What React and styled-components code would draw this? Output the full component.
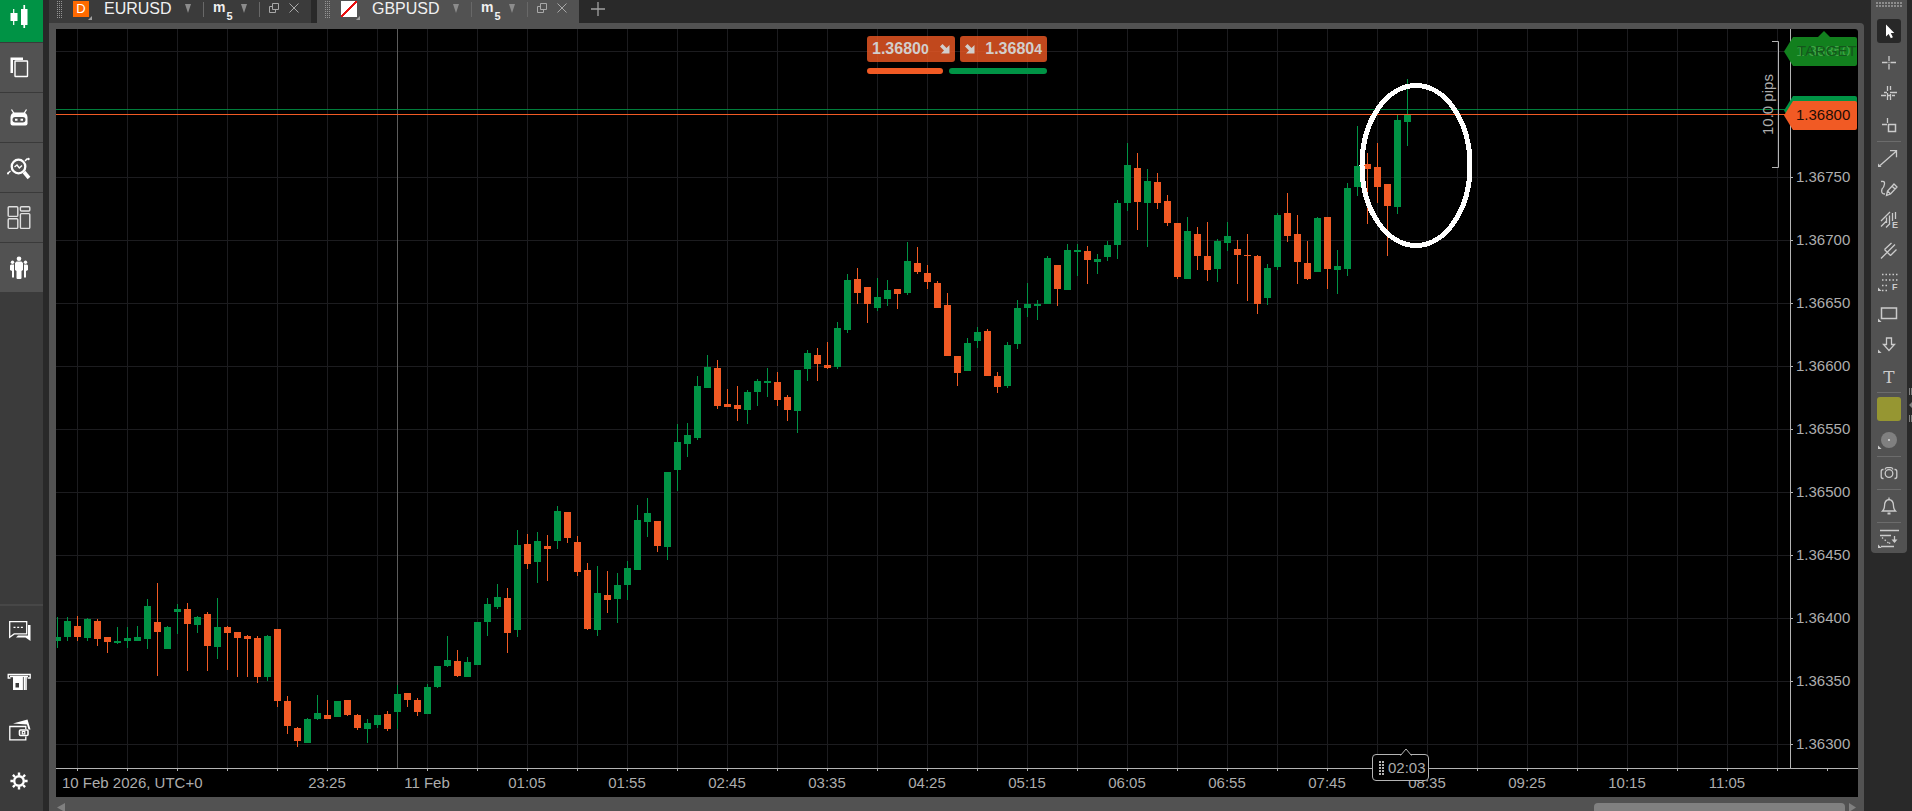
import React from 'react';
import styled, { createGlobalStyle } from 'styled-components';

const UP = '#009345';
const DOWN = '#f15a24';

const GlobalStyle = createGlobalStyle`
  * {
    box-sizing: border-box;
  }

  body {
    margin: 0;
    overflow: hidden;
    background-color: #292929;
    font-family: "Liberation Sans", Arial, sans-serif;
    font-size: 15px;
  }

  button {
    padding: 0;
    border: 0;
    background: none;
    color: inherit;
    font: inherit;
    cursor: pointer;
  }
`

const Page = styled.div`
  display: flex;
  height: 100vh;
  overflow: hidden;
`

/* ---------- left sidebar ---------- */

const Sidebar = styled.nav`
  flex: none;
  width: 43px;
  display: flex;
  flex-direction: column;
  justify-content: space-between;
  background-color: #3b3b3b;
`

const SideGroup = styled.div`
  display: flex;
  flex-direction: column;
  margin-top: -8px;
`

const SideFooter = styled.div`
  display: flex;
  flex-direction: column;
  padding-bottom: 5px;
  border-top: 2px solid #474747;
`

const SideButton = styled.button`
  display: flex;
  align-items: center;
  justify-content: center;
  height: 50px;
  padding-right: 6px;
  color: #fff;
  background-color: ${props => (props.$active ? UP : props.$plain ? 'transparent' : '#525252')};
  border-top: ${props => (props.$plain || props.$active ? '0' : '1px solid #3a3a3a')};
`

/* ---------- workspace ---------- */

const Workspace = styled.main`
  flex: 1;
  min-width: 0;
  display: flex;
  flex-direction: column;
  padding-left: 6px;
`

const TabBar = styled.div`
  display: flex;
  height: 23px;
  gap: 6px;
`

const Tab = styled.div`
  display: flex;
  align-items: flex-start;
  width: 262px;
  padding-left: 8px;
  color: #f0f0f0;
  background-color: ${props => (props.$active ? '#525252' : '#3b3b3b')};
`

const Grip = styled.span`
  width: 5px;
  height: 17px;
  margin: 1px 11px 0 0;
  background-image:
    linear-gradient(transparent 1px, ${props => (props.$active ? '#525252' : '#3b3b3b')} 1px),
    linear-gradient(90deg, #949494 1px, transparent 1px);
  background-size: 2px 2px;
`

const SymbolBadge = styled.button`
  position: relative;
  width: 16px;
  height: 16px;
  margin: 1px 15px 0 0;
  color: #fff;
  font-size: 13px;
  line-height: 16px;
  background: ${props => props.$fill};

  &::after {
    content: "";
    position: absolute;
    right: -3px;
    bottom: -3px;
    border-left: 4px solid transparent;
    border-bottom: 4px solid #a0a0a0;
  }
`

const SymbolName = styled.span`
  width: 81px;
  font-size: 16px;
  line-height: 17px;
`

const Caret = styled.button`
  width: 6px;
  height: 9px;
  margin: 4px 12px 0 0;
  background-color: #8c8c8c;
  clip-path: polygon(0 0, 100% 0, 50% 100%);
`

const Separator = styled.span`
  width: 1px;
  height: 15px;
  margin: 2px 9px 0 0;
  background-color: #686868;
`

const Period = styled.span`
  display: flex;
  gap: 1px;
  width: 28px;
  font-size: 14px;
  font-weight: bold;
  line-height: 14px;

  sub {
    margin-top: 10px;
    font-size: 11px;
    line-height: 12px;
  }
`

const TabAction = styled.button`
  display: flex;
  width: 20px;
  margin-top: 3px;
  color: #a8a8a8;
`

const AddTab = styled.button`
  display: flex;
  align-self: flex-start;
  margin: 2px 0 0 6px;
  color: #a0a0a0;
`

const Panel = styled.section`
  flex: 1;
  min-height: 0;
  display: flex;
  flex-direction: column;
  margin-right: 7px;
  padding: 6px 6px 0 7px;
  background-color: #525252;
  border-top-right-radius: 4px;
`

const Chart = styled.div`
  position: relative;
  flex: 1;
  min-height: 0;
  display: grid;
  grid-template-columns: minmax(0, 1fr) 68px;
  grid-template-rows: minmax(0, 1fr) 29px;
  background-color: #000;
  border-radius: 0 3px 0 0;
  color: #adadad;
`

const Plot = styled.div`
  position: relative;
  overflow: hidden;
  background-image:
    linear-gradient(90deg, #1c1c1f 1px, transparent 1px),
    linear-gradient(#1c1c1f 1px, transparent 1px);
  background-size: 50px 50px, 63px 63px;
  background-position: 21px 0, 0 22px;
`

const PlotCanvas = styled.svg`
  display: block;
  width: 100%;
  height: 100%;
`

const Ruler = styled.svg`
  position: absolute;
  top: 0;
  right: 0;
`

const PriceAxis = styled.div`
  position: relative;
  border-left: 1px solid #b4b4b4;
  background-image: linear-gradient(#b4b4b4 1px, transparent 1px);
  background-size: 2px 63px;
  background-position: 0 22px;
  background-repeat: repeat-y;
`

const PriceList = styled.ol`
  height: 100%;
  margin: 0;
  padding: 54px 0 0 5px;
  overflow: hidden;
  list-style: none;
`

const PriceLabel = styled.li`
  height: 63px;
  line-height: 62px;

  &:first-child {
    visibility: hidden;
  }
`

const TimeAxis = styled.ol`
  grid-column: 1 / -1;
  display: flex;
  margin: 0;
  padding: 0;
  overflow: hidden;
  list-style: none;
  border-top: 1px solid #b4b4b4;
  line-height: 28px;
  background-image: linear-gradient(90deg, #b4b4b4 1px, transparent 1px);
  background-size: 50px 2px;
  background-position: 21px 0;
  background-repeat: repeat-x;
`

const TimeLabel = styled.li`
  flex: none;
  width: 100px;
  text-align: center;

  &:first-child {
    width: 221px;
    padding-left: 6px;
    text-align: left;
  }
`

/* price flags hang over the axis line */
const Flag = styled.div`
  position: absolute;
  top: ${props => props.$top}px;
  right: 1px;
  width: 73px;
  height: 29px;
  padding-left: 12px;
  line-height: 28px;
  color: ${props => props.$ink};

  svg {
    position: absolute;
    top: -6px;
    left: 0;
  }

  span {
    position: relative;
  }

  span + span {
    position: absolute;
    left: 13px;
    color: #14571c;
  }
`

const Quotes = styled.div`
  position: absolute;
  top: 7px;
  left: 50%;
  width: 180px;
  margin-left: -90px;
  display: flex;
  flex-direction: column;
  gap: 6px;
`

const QuoteRow = styled.div`
  display: flex;
  gap: ${props => props.$gap}px;
`

const QuoteButton = styled.button`
  flex: 1;
  display: flex;
  align-items: center;
  justify-content: space-between;
  height: 26px;
  padding: 0 5px;
  border-radius: 3px;
  color: #d2cecc;
  font-size: 16px;
  font-weight: bold;
  line-height: 24px;
  background-color: rgba(241, 90, 36, 0.8);

  small {
    font-size: 14px;
  }
`

const Sentiment = styled.span`
  flex: ${props => props.$share};
  height: 6px;
  border-radius: 3px;
  background-color: ${props => props.$color};
`

const Countdown = styled.div`
  position: absolute;
  left: 1316px;
  bottom: 16px;
  display: flex;
  align-items: center;
  gap: 2px;
  width: 57px;
  height: 27px;
  padding-left: 6px;
  border: 1px solid #b4b4b4;
  border-radius: 4px;
  background-color: #000;
  line-height: 24px;

  > svg:first-child {
    position: absolute;
    top: -7px;
    left: 27px;
  }
`

const ScrollBar = styled.div`
  flex: none;
  display: flex;
  justify-content: space-between;
  height: 14px;
  padding: 6px 2px 0 1px;
  overflow: hidden;
  color: #808080;
`

const ScrollEnd = styled.div`
  display: flex;
  gap: 4px;
`

const ScrollThumb = styled.span`
  width: 251px;
  height: 11px;
  border-radius: 4px;
  background-color: #808080;
`

/* ---------- drawing toolbar ---------- */

const ToolRail = styled.aside`
  flex: none;
  display: flex;
  width: 41px;
`

const Tools = styled.div`
  display: flex;
  flex-direction: column;
  align-self: flex-start;
  width: 36px;
  padding: 2px 6px 2px;
  border-radius: 0 0 4px 4px;
  background-color: #525252;
`

const ToolGrip = styled.span`
  height: 6px;
  margin: 0 -1px 11px;
  background-image:
    linear-gradient(transparent 2px, #525252 2px),
    linear-gradient(90deg, #8c8c8c 2px, transparent 2px);
  background-size: 3px 3px;
`

const ToolGroup = styled.div`
  display: flex;
  flex-direction: column;
  gap: 7px;
`

const ToolButton = styled.button`
  display: flex;
  width: 24px;
  height: 24px;
  border-radius: 3px;
  color: #cbcbcb;
  background-color: ${props => props.$fill || 'transparent'};
`

const ToolDivider = styled.span`
  height: 1px;
  margin: ${props => (props.$tight ? '4px 0' : '5px 0 4px')};
  background-color: #6c6c6c;
`

const RailHandle = styled.button`
  display: flex;
  align-self: flex-start;
  width: 4px;
  margin: 388px 0 0 1px;
  overflow: hidden;
`

const prices = [
  '1.36800', '1.36750', '1.36700', '1.36650', '1.36600', '1.36550',
  '1.36500', '1.36450', '1.36400', '1.36350', '1.36300',
];

const times = [
  '10 Feb 2026, UTC+0', '23:25', '11 Feb', '01:05', '01:55', '02:45', '03:35', '04:25',
  '05:15', '06:05', '06:55', '07:45', '08:35', '09:25', '10:15', '11:05',
];

// direction, high, body top, body bottom, low
const candles = [
  ['u', 617, 637, 641, 648], ['u', 617, 621, 637, 641], ['d', 616, 626, 637, 641], ['u', 618, 619, 638, 641],
  ['d', 619, 621, 639, 646], ['d', 637, 637, 642, 653], ['u', 627, 641, 643, 644], ['u', 627, 638, 641, 648],
  ['u', 626, 637, 641, 641], ['u', 599, 606, 639, 649], ['d', 583, 622, 632, 676], ['u', 626, 627, 649, 649],
  ['u', 604, 609, 612, 634], ['d', 603, 609, 624, 671], ['u', 616, 617, 625, 633], ['d', 612, 614, 646, 671],
  ['u', 598, 627, 647, 659], ['d', 626, 627, 633, 670], ['d', 632, 632, 638, 677], ['d', 635, 636, 639, 677],
  ['d', 636, 638, 677, 683], ['u', 635, 636, 677, 681], ['d', 629, 629, 701, 707], ['d', 696, 701, 726, 734],
  ['d', 727, 728, 741, 747], ['u', 718, 719, 743, 743], ['u', 695, 713, 719, 720], ['d', 700, 715, 719, 719],
  ['u', 701, 701, 717, 717], ['d', 700, 700, 715, 716], ['d', 714, 715, 728, 730], ['u', 719, 723, 729, 743],
  ['u', 715, 715, 725, 728], ['d', 711, 714, 729, 731], ['u', 685, 694, 712, 729], ['d', 693, 693, 700, 707],
  ['d', 698, 700, 712, 716], ['u', 684, 687, 714, 714], ['u', 666, 666, 687, 688], ['u', 636, 660, 666, 667],
  ['d', 650, 661, 676, 677], ['u', 657, 662, 677, 677], ['u', 622, 622, 665, 665], ['u', 598, 604, 622, 636],
  ['u', 584, 597, 607, 609], ['d', 588, 598, 633, 653], ['u', 530, 545, 630, 637], ['d', 534, 544, 564, 569],
  ['u', 532, 541, 562, 583], ['d', 535, 546, 549, 581], ['u', 506, 511, 541, 549], ['d', 512, 512, 538, 543],
  ['d', 536, 542, 572, 576], ['d', 563, 570, 629, 630], ['u', 566, 593, 630, 636], ['d', 571, 595, 600, 613],
  ['u', 573, 585, 599, 623], ['u', 561, 568, 585, 600], ['u', 505, 520, 570, 570], ['u', 498, 513, 522, 537],
  ['d', 521, 521, 546, 552], ['u', 472, 472, 547, 560], ['u', 424, 442, 470, 491], ['u', 423, 435, 444, 457],
  ['u', 376, 386, 438, 440], ['u', 355, 367, 388, 388], ['d', 360, 368, 406, 409], ['d', 389, 404, 407, 407],
  ['d', 386, 405, 409, 421], ['u', 390, 392, 410, 424], ['u', 379, 381, 392, 406], ['u', 368, 381, 383, 397],
  ['d', 372, 382, 400, 406], ['d', 395, 397, 410, 421], ['u', 370, 370, 411, 433], ['u', 350, 353, 369, 381],
  ['d', 348, 355, 364, 381], ['d', 342, 365, 368, 369], ['u', 322, 328, 367, 369], ['u', 274, 280, 330, 333],
  ['d', 268, 279, 293, 304], ['d', 287, 287, 304, 323], ['u', 278, 297, 308, 311], ['u', 280, 290, 299, 306],
  ['d', 289, 289, 294, 309], ['u', 242, 261, 293, 295], ['d', 247, 263, 272, 274], ['d', 265, 273, 282, 289],
  ['d', 281, 283, 308, 308], ['d', 293, 305, 356, 356], ['d', 356, 356, 373, 386], ['u', 338, 343, 371, 371],
  ['u', 327, 332, 341, 348], ['d', 329, 331, 376, 376], ['d', 372, 376, 387, 393], ['u', 342, 345, 386, 388],
  ['u', 300, 308, 344, 349], ['u', 283, 304, 308, 317], ['u', 300, 304, 306, 320], ['u', 256, 258, 304, 304],
  ['d', 265, 265, 289, 306], ['u', 244, 250, 290, 290], ['u', 244, 250, 252, 276], ['d', 246, 251, 260, 284],
  ['u', 254, 259, 262, 274], ['u', 241, 245, 257, 261], ['u', 200, 203, 245, 259], ['u', 143, 165, 203, 211],
  ['d', 153, 168, 202, 230], ['u', 169, 181, 203, 247], ['d', 173, 182, 203, 209], ['d', 195, 201, 223, 226],
  ['d', 223, 223, 277, 279], ['u', 217, 231, 279, 279], ['d', 227, 234, 256, 270], ['d', 222, 256, 270, 281],
  ['u', 239, 241, 269, 282], ['u', 222, 236, 243, 251], ['d', 240, 249, 255, 284], ['d', 234, 255, 256, 301],
  ['d', 255, 256, 304, 314], ['u', 264, 268, 298, 305], ['u', 213, 215, 267, 270], ['d', 193, 213, 236, 242],
  ['d', 215, 234, 262, 284], ['d', 241, 263, 279, 280], ['u', 217, 218, 272, 272], ['d', 217, 217, 269, 289],
  ['u', 250, 266, 270, 294], ['u', 183, 188, 269, 276], ['u', 126, 166, 187, 196], ['d', 153, 164, 169, 224],
  ['d', 143, 167, 187, 203], ['d', 184, 184, 206, 256], ['u', 115, 120, 207, 214], ['u', 79, 114, 122, 146],
];

const STEP = 10;
const BASE = 29;

function Candle({ index, data }) {
  const [dir, high, top, bottom, low] = data;
  const x = 1 + index * STEP;
  return (
    <g fill={dir === 'u' ? UP : DOWN}>
      <rect x={x} y={high - BASE} width="1" height={low - high} />
      <rect x={x - 3} y={top - BASE} width="7" height={bottom - top} />
    </g>
  );
}

function Icon({ size = 24, children, ...rest }) {
  return (
    <svg width={size} height={size} viewBox={`0 0 ${size} ${size}`} fill="none" stroke="currentColor" strokeWidth="1.3" aria-hidden="true" {...rest}>
      {children}
    </svg>
  );
}

const Corner = () => <path d="M1 17.5V21h3.6z" fill="currentColor" stroke="none" />;

const sideIcons = {
  Trade: (
    <g fill="currentColor" stroke="none">
      <path d="M3.5 8h2.6V4h1.200v4h3.2v8H7.3v4H6.1v-4H3.5z" />
      <path d="M14 4h2.4V0h1.700v4h2.4v16h-2.4v3h-1.700v-3H14z" />
    </g>
  ),
  Copy: (
    <g>
      <path d="M3.5 17V1.500H16V4H6v13z" fill="currentColor" stroke="none" />
      <rect x="8" y="5" width="12.500" height="15.500" rx="0.500" strokeWidth="1.4" />
    </g>
  ),
  Algo: (
    <g>
      <path d="M4.500 3.500l2.500 4M19.500 3.500l-2.500 4" strokeWidth="1.300" />
      <path d="M7 6.500h10q3.500 1 3.500 5v6q0 2-2 2h-13q-2 0-2-2v-6q0-4 3.500-5z" fill="currentColor" stroke="none" />
      <rect x="5.500" y="11" width="13" height="5.500" rx="2.700" fill="#525252" stroke="none" />
      <path d="M8 13.700h2.500M13.500 13.700H16" strokeWidth="2" />
    </g>
  ),
  Analyze: (
    <g>
      <circle cx="11.500" cy="10.500" r="6.800" strokeWidth="2.300" />
      <path d="M17 16l5 6" strokeWidth="3.600" />
      <path d="M7.500 11l2.500-2 2.300 3 2.700-2.500" strokeWidth="1.400" />
      <path d="M0.500 17.500l3-2.500M18 5l2.500-2.500" strokeWidth="1.500" />
      <circle cx="21.500" cy="3" r="1.200" fill="currentColor" stroke="none" />
      <circle cx="1" cy="17.500" r="1" fill="currentColor" stroke="none" />
    </g>
  ),
  Layout: (
    <g stroke="#e0e0e0" strokeWidth="1.400">
      <rect x="1.200" y="0.800" width="9.600" height="9.600" rx="1" />
      <rect x="1.200" y="12.800" width="9.600" height="9.600" rx="1" />
      <rect x="13.400" y="0.800" width="9.400" height="4.200" rx="1" />
      <rect x="13.400" y="7.600" width="9.400" height="14.800" rx="1" />
    </g>
  ),
  Community: (
    <g fill="currentColor" stroke="none">
      <circle cx="12" cy="2.700" r="2.300" />
      <path d="M9.500 5.500h5l1.500 1.500v7l-1.500 1V22q0 1-1 1h-3q-1 0-1-1v-7L8 14V7z" />
      <circle cx="5.500" cy="6.300" r="1.700" />
      <path d="M4 8.500h3V21.500H5V15L3 14V9.500z" />
      <circle cx="18.500" cy="6.300" r="1.700" />
      <path d="M20 8.500h-3V21.500h2V15l2-1V9.500z" />
    </g>
  ),
};

const footIcons = {
  Chat: (
    <g>
      <path d="M2.700 2.700h17v12.200H7.200l-4.500 3.300z" />
      <path d="M6.500 8.300h2M10.200 8.300h2M13.900 8.300h2" />
      <path d="M21 6h2.500v16l-5-3.500H9l2-2h10z" fill="currentColor" stroke="none" />
    </g>
  ),
  Deposit: (
    <g>
      <path d="M3.500 9H1.200V5.500h22V9h-2.500" />
      <path d="M3 7.500h18M19 7.500V21" strokeWidth="1.600" />
      <path d="M6 7.500h12V21H6zM8.500 14v4.500h3.500V14z" fill="currentColor" fillRule="evenodd" stroke="none" />
      <path d="M16.400 8v13" stroke="#3b3b3b" strokeWidth="0.800" />
    </g>
  ),
  Wallet: (
    <g>
      <path d="M6 4.500L20.500 0.500l3 10h-2L20 5.500z" fill="currentColor" stroke="none" />
      <path d="M18.800 10V7.500h-16v13.300h16V17.500" />
      <rect x="12.500" y="11" width="8.500" height="5.500" rx="1" strokeWidth="1.600" />
      <rect x="15.300" y="12.500" width="2.500" height="2.500" strokeWidth="1.200" />
    </g>
  ),
  Settings: (
    <g>
      <circle cx="12" cy="12" r="4.800" strokeWidth="2.400" />
      <g strokeWidth="2.400">
        <path d="M12 3.400v3M12 17.600v3M3.400 12h3M17.600 12h3" />
        <path d="M5.900 5.900L8 8M16 16l2.100 2.100M5.900 18.100L8 16M16 8l2.100-2.100" />
      </g>
    </g>
  ),
};

const tools = [
  [
    ['Cursor', <path d="M9 5.500v12l2.700-2.500 2.100 4.200 2.100-1-2.100-4.100h3.500z" fill="#fff" stroke="none" />],
    ['Crosshair', <path d="M5 12.500h5.500M13.500 12.500H19M12 6v5M12 14v5.500M11.500 12.500h1" />],
    ['Multi crosshair', <path d="M4 14.500h5M11 14.500h2M15 14.500h3M7 11.500h3M13 11.500h7M10.500 5v5M10.500 12v7M13.500 5v4M13.500 13v6" />],
    ['Crosshair selection', <g><path d="M5 12.500h5M10.500 6v5" /><rect x="11.500" y="12.500" width="7" height="7" strokeWidth="1.500" /></g>],
  ],
  [
    ['Trend line', <g><path d="M3 19.500L19.500 5M13 4.700h6.500v6.500" /><Corner /></g>],
    ['Pencil', <g><path d="M4 4.500q4-1 3.500 2.500T5 12q-1.500 5 3 5" /><path d="M9.500 18.500l1-4.500 6.500-7 3 3-6.500 7zM15 9l3 3M10.500 14l3 3" /></g>],
    ['Equidistant lines', <g><path d="M4 13L13 4M4 18.500l5.500-5.500M9 19.500l4-4M9.500 9.500V15M12.500 7.500v8M15.500 5v8M18.500 4v7" /><text x="15" y="20" fontFamily="Liberation Sans" fontSize="9" fontWeight="bold" fill="currentColor" stroke="none">E</text></g>],
    ['Pitchfork', <path d="M4 19.500l6-6M7.500 10.500l6 6M7.500 10.500L14.500 4M10 13.500l8-8M13.500 16.500L19.500 10.500" />],
    ['Fibonacci', <g><path d="M5 4.500h16M5 10h16M5 15.500h7M5 20.500h7" strokeDasharray="1.500 2" strokeWidth="1.500" /><text x="15" y="20" fontFamily="Liberation Sans" fontSize="9" fontWeight="bold" fill="currentColor" stroke="none">F</text><Corner /></g>],
    ['Rectangle', <g><rect x="4.500" y="7" width="15" height="10.500" strokeWidth="1.500" /><Corner /></g>],
    ['Arrow', <g><path d="M9.500 6h5v6.500h3L12 18.500l-5.500-6h3z" /><Corner /></g>],
    ['Text', <text x="12" y="20" textAnchor="middle" fontFamily="DejaVu Serif" fontSize="17" fill="currentColor" stroke="none">T</text>],
  ],
  [
    ['Color', null, '#969632'],
    ['Opacity', <g><circle cx="12" cy="12" r="8" fill="#808080" stroke="none" /><circle cx="12" cy="12" r="1" fill="#ddd" stroke="none" /><Corner /></g>],
  ],
  [
    ['Snapshot', <g><circle cx="12" cy="12.500" r="3.800" /><path d="M6.500 17.500H6q-1.800 0-1.800-2v-5q0-2 1.800-2h.500M17.500 17.500h.500q1.800 0 1.800-2v-5q0-2-1.800-2h-.500M8 8.500q.800-1.800 2-1.800h4q1.200 0 2 1.800" /></g>],
  ],
  [
    ['Alerts', <g><path d="M5.500 17q2-2 2-5 0-6 4.500-6.500 4.500.5 4.500 6.500 0 3 2 5zM12 3.500v2" /><path d="M10.500 19.500h3" strokeWidth="2" /></g>],
  ],
  [
    ['Indicators', <g><path d="M3 3.500h19M3 8.500h11M4 19.500h13" /><path d="M5 10.500l7 6M12 16.500l3-2" strokeDasharray="1.500 2" /><path d="M17.500 9v6" /><path d="M14.500 12.500h6l-3 3.500z" fill="currentColor" stroke="none" /><Corner /></g>],
  ],
];

function ChartTab({ symbol, active, badge, fill }) {
  return (
    <Tab $active={active}>
      <Grip $active={active} />
      <SymbolBadge $fill={fill} aria-label={`${symbol} mode`}>{badge}</SymbolBadge>
      <SymbolName>{symbol}</SymbolName>
      <Caret aria-label="Change symbol" />
      <Separator />
      <Period>m<sub>5</sub></Period>
      <Caret aria-label="Change period" />
      <Separator />
      <TabAction aria-label="Detach">
        <Icon size={10} strokeWidth="1">
          <path d="M3.500 0.500h6v6h-6zM3.500 3.500h-3v6h6v-3" />
        </Icon>
      </TabAction>
      <TabAction aria-label="Close">
        <Icon size={10} strokeWidth="1">
          <path d="M0.500 0.500l9 9M9.500 0.500l-9 9" />
        </Icon>
      </TabAction>
    </Tab>
  );
}

function PriceFlag({ top, fill, ink, pointer, children }) {
  return (
    <Flag $top={top} $ink={ink}>
      <svg width="73" height="35" fill={fill} aria-hidden="true">
        <path d="M0 20.500L9 6H71q2 0 2 2V33q0 2-2 2H9z" />
        {pointer && <path d="M33 7l7-7 7 7z" />}
      </svg>
      {children}
    </Flag>
  );
}

const QuoteArrow = () => (
  <svg width="10" height="10" fill="currentColor" aria-hidden="true">
    <path d="M0 2.500L2.500 0 6.500 4 9.500 1v8.500H1L4 6.500z" />
  </svg>
);

function PriceChart() {
  return (
    <Chart>
      <Plot>
        <PlotCanvas shapeRendering="crispEdges">
          <rect x="341" y="0" width="1" height="100%" fill="#5c5c5c" />
          {candles.map((data, i) => <Candle key={i} index={i} data={data} />)}
          <rect x="0" y="80" width="100%" height="1" fill={UP} opacity="0.85" />
          <rect x="0" y="85" width="100%" height="1" fill={DOWN} />
          <ellipse cx="1360" cy="136.500" rx="54" ry="80" fill="none" stroke="#fff" strokeWidth="5" />
        </PlotCanvas>
        <Ruler width="40" height="150">
          <text transform="translate(23 106) rotate(-90)" fontSize="15" fill="#adadad">10.0 pips</text>
          <path d="M22 12.500h6.500v126H22" fill="none" stroke="#b4b4b4" />
        </Ruler>
      </Plot>
      <PriceAxis>
        <PriceList>
          {prices.map(price => <PriceLabel key={price}>{price}</PriceLabel>)}
        </PriceList>
        <PriceFlag top={8} fill="#12801e" ink="#42a548" pointer>
          <span>1.36850</span>
          <span>TARGET</span>
        </PriceFlag>
        <PriceFlag top={67} fill={UP} />
        <PriceFlag top={72} fill={DOWN} ink="#1c0d06">
          <span>1.36800</span>
        </PriceFlag>
      </PriceAxis>
      <TimeAxis>
        {times.map(time => <TimeLabel key={time}>{time}</TimeLabel>)}
      </TimeAxis>

      <Quotes>
        <QuoteRow $gap={5}>
          <QuoteButton>
            <span>1.3680<small>0</small></span>
            <QuoteArrow />
          </QuoteButton>
          <QuoteButton>
            <QuoteArrow />
            <span>1.3680<small>4</small></span>
          </QuoteButton>
        </QuoteRow>
        <QuoteRow $gap={6}>
          <Sentiment $share={76} $color={DOWN} />
          <Sentiment $share={98} $color={UP} />
        </QuoteRow>
      </Quotes>

      <Countdown>
        <svg width="12" height="8" aria-hidden="true">
          <path d="M0.500 7.500L6 1l5.500 6.500" fill="#000" stroke="#b4b4b4" />
        </svg>
        <svg width="7" height="14" fill="#b4b4b4" aria-hidden="true">
          {[0, 3, 6, 9, 12].map(y => (
            <g key={y}>
              <rect x="0" y={y} width="2" height="2" />
              <rect x="3" y={y} width="2" height="2" />
            </g>
          ))}
        </svg>
        02:03
      </Countdown>
    </Chart>
  );
}

function App() {
  return (
    <Page>
      <GlobalStyle />
      <Sidebar>
        <SideGroup>
          {Object.entries(sideIcons).map(([name, icon], i) => (
            <SideButton key={name} $active={i === 0} aria-label={name}>
              <Icon>{icon}</Icon>
            </SideButton>
          ))}
        </SideGroup>
        <SideFooter>
          {Object.entries(footIcons).map(([name, icon]) => (
            <SideButton key={name} $plain aria-label={name}>
              <Icon>{icon}</Icon>
            </SideButton>
          ))}
        </SideFooter>
      </Sidebar>

      <Workspace>
        <TabBar>
          <ChartTab symbol="EURUSD" badge="D" fill="#ff6a00" />
          <ChartTab
            symbol="GBPUSD"
            active
            fill="linear-gradient(135deg, #fff 45%, #e81010 45%, #e81010 55%, #fff 55%)"
          />
          <AddTab aria-label="Add chart">
            <Icon size={14}>
              <path d="M7 0v14M0 7h14" />
            </Icon>
          </AddTab>
        </TabBar>
        <Panel>
          <PriceChart />
          <ScrollBar>
            <svg width="8" height="10" fill="currentColor" aria-hidden="true">
              <path d="M8 0v9L0 4.500z" />
            </svg>
            <ScrollEnd>
              <ScrollThumb />
              <svg width="7" height="10" fill="currentColor" aria-hidden="true">
                <path d="M0 0v9l7-4.500z" />
              </svg>
            </ScrollEnd>
          </ScrollBar>
        </Panel>
      </Workspace>

      <ToolRail>
        <Tools>
          <ToolGrip />
          {tools.map((group, i) => (
            <React.Fragment key={i}>
              {i > 0 && <ToolDivider $tight={i > 2} />}
              <ToolGroup>
                {group.map(([name, icon, fill]) => (
                  <ToolButton key={name} $fill={name === 'Cursor' ? '#282828' : fill} aria-label={name}>
                    <Icon>{icon}</Icon>
                  </ToolButton>
                ))}
              </ToolGroup>
            </React.Fragment>
          ))}
        </Tools>
        <RailHandle aria-label="Collapse panel">
          <svg width="8" height="34" fill="#808080" aria-hidden="true">
            <path d="M1 0h1v7H1zM3 0h1v7H3zM1 27h1v7H1zM3 27h1v7H3zM5 13v8l-4-4z" />
          </svg>
        </RailHandle>
      </ToolRail>
    </Page>
  );
}

export default App;
